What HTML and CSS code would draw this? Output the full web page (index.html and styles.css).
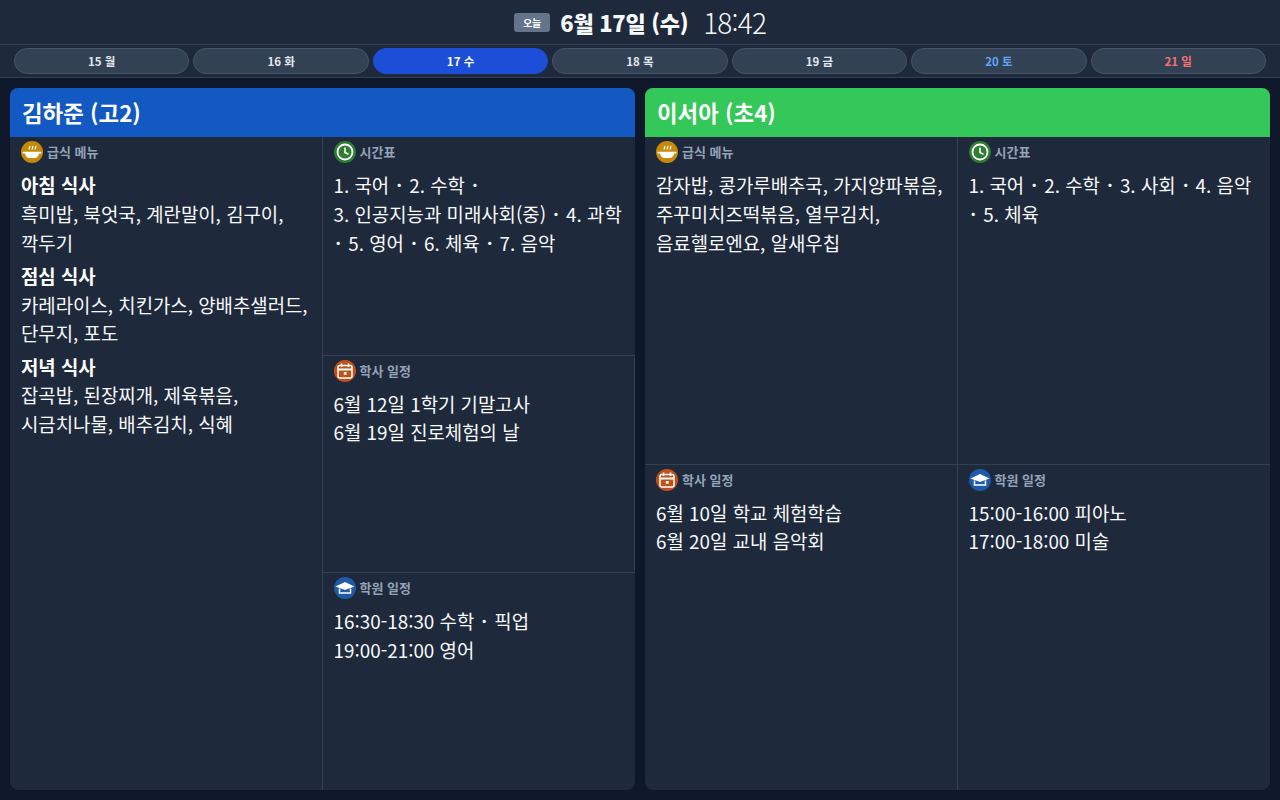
FILE: index.html
```html
<!DOCTYPE html>
<html lang="ko">
<head>
    <meta charset="UTF-8">
    <meta name="viewport" content="width=device-width, initial-scale=1.0">
    <title>가족 일정</title>
    <link rel="stylesheet" href="styles.css">
</head>
<body>
    <svg class="icon-defs" width="0" height="0">
        <symbol id="i-meal" viewBox="0 0 22 22">
            <path d="M4 12h14c0 2.500-1.500 4-3.500 5h-7C5.500 16 4 14.500 4 12z" fill="#fff"/>
            <rect x="1.500" y="10.800" width="19" height="1.800" rx="0.900" fill="#fff"/>
            <path d="M8 8.500l1-3.500M11 8.500l1-3.500M14 8.500l1-3.500" stroke="#fff" stroke-width="1.200" fill="none"/>
        </symbol>
        <symbol id="i-clock" viewBox="0 0 22 22">
            <circle cx="11" cy="11" r="7.500" stroke="#fff" stroke-width="1.800" fill="none"/>
            <path d="M11 6.500V11.500L14.500 13.200" stroke="#fff" stroke-width="1.600" fill="none"/>
        </symbol>
        <symbol id="i-cal" viewBox="0 0 22 22">
            <rect x="4" y="5.500" width="14" height="12.500" rx="2" stroke="#fff" stroke-width="1.500" fill="none"/>
            <path d="M4 9.500h14" stroke="#fff" stroke-width="2"/>
            <path d="M7.500 3.500v3.500M14.500 3.500v3.500" stroke="#fff" stroke-width="1.500"/>
            <rect x="9.800" y="12" width="2.800" height="2.800" fill="#fff"/>
        </symbol>
        <symbol id="i-grad" viewBox="0 0 22 22">
            <path d="M11 5L20.500 9.500L11 13L1.500 9.500z" fill="#fff"/>
            <path d="M5.500 11.500V16H16.500V11.500" stroke="#fff" stroke-width="1.500" fill="none"/>
        </symbol>
    </svg>

    <header class="topbar">
        <span class="today-badge">오늘</span>
        <span class="today-date">6월 17일 (수)</span>
        <span class="today-clock">18:42</span>
    </header>

    <nav class="day-tabs">
        <div class="day-tab">15 월</div>
        <div class="day-tab">16 화</div>
        <div class="day-tab active">17 수</div>
        <div class="day-tab">18 목</div>
        <div class="day-tab">19 금</div>
        <div class="day-tab sat">20 토</div>
        <div class="day-tab sun">21 일</div>
    </nav>

    <main class="board">
        <!-- 첫째 -->
        <section class="kid">
            <h2 class="kid-name blue">김하준 (고2)</h2>
            <div class="kid-grid three">
                <div class="cell meal-cell">
                    <div class="cell-label"><span class="badge amber"><svg><use href="#i-meal"/></svg></span>급식 메뉴</div>
                    <div class="cell-body">
                        <div class="meal-title">아침 식사</div>
                        <div class="meal-text">흑미밥, 북엇국, 계란말이, 김구이, 깍두기</div>
                        <div class="meal-title">점심 식사</div>
                        <div class="meal-text">카레라이스, 치킨가스, 양배추샐러드, 단무지, 포도</div>
                        <div class="meal-title">저녁 식사</div>
                        <div class="meal-text">잡곡밥, 된장찌개, 제육볶음,<br>시금치나물, 배추김치, 식혜</div>
                    </div>
                </div>
                <div class="cell">
                    <div class="cell-label"><span class="badge green"><svg><use href="#i-clock"/></svg></span>시간표</div>
                    <div class="cell-body">1. 국어 ･ 2. 수학 ･<br>3. 인공지능과 미래사회(중) ･ 4. 과학<br>･ 5. 영어 ･ 6. 체육 ･ 7. 음악</div>
                </div>
                <div class="cell">
                    <div class="cell-label"><span class="badge orange"><svg><use href="#i-cal"/></svg></span>학사 일정</div>
                    <div class="cell-body">6월 12일 1학기 기말고사<br>6월 19일 진로체험의 날</div>
                </div>
                <div class="cell">
                    <div class="cell-label"><span class="badge navy"><svg><use href="#i-grad"/></svg></span>학원 일정</div>
                    <div class="cell-body">16:30-18:30 수학 ･ 픽업<br>19:00-21:00 영어</div>
                </div>
            </div>
        </section>

        <!-- 둘째 -->
        <section class="kid">
            <h2 class="kid-name lime">이서아 (초4)</h2>
            <div class="kid-grid two">
                <div class="cell">
                    <div class="cell-label"><span class="badge amber"><svg><use href="#i-meal"/></svg></span>급식 메뉴</div>
                    <div class="cell-body">감자밥, 콩가루배추국, 가지양파볶음,<br>주꾸미치즈떡볶음, 열무김치,<br>음료헬로엔요, 알새우칩</div>
                </div>
                <div class="cell">
                    <div class="cell-label"><span class="badge green"><svg><use href="#i-clock"/></svg></span>시간표</div>
                    <div class="cell-body">1. 국어 ･ 2. 수학 ･ 3. 사회 ･ 4. 음악<br>･ 5. 체육</div>
                </div>
                <div class="cell">
                    <div class="cell-label"><span class="badge orange"><svg><use href="#i-cal"/></svg></span>학사 일정</div>
                    <div class="cell-body">6월 10일 학교 체험학습<br>6월 20일 교내 음악회</div>
                </div>
                <div class="cell">
                    <div class="cell-label"><span class="badge navy"><svg><use href="#i-grad"/></svg></span>학원 일정</div>
                    <div class="cell-body">15:00-16:00 피아노<br>17:00-18:00 미술</div>
                </div>
            </div>
        </section>
    </main>
</body>
</html>
```

FILE: styles.css
```css
* {
    box-sizing: border-box;
}
html, body {
    height: 100%;
}
body {
    margin: 0;
    height: 800px;
    overflow: hidden;
    display: flex;
    flex-direction: column;
    background-color: #0f172a;
    color: #f8fafc;
    font-family: "Noto Sans CJK KR", "Noto Sans", sans-serif;
}
.icon-defs {
    position: absolute;
}
.topbar {
    height: 45px;
    display: flex;
    justify-content: center;
    align-items: center;
    gap: 10px;
    background-color: #1e293b;
    border-bottom: 1px solid #334155;
}
.today-badge {
    background-color: #64748b;
    color: white;
    font-size: 10px;
    font-weight: 700;
    padding: 2px 9px;
    border-radius: 3px;
    line-height: 15px;
}
.today-date {
    font-size: 22px;
    font-weight: 900;
    line-height: 32px;
    letter-spacing: -0.3px;
}
.today-clock {
    font-size: 28px;
    font-weight: 300;
    line-height: 32px;
    letter-spacing: -0.800px;
    margin-left: 5px;
}
.day-tabs {
    height: 33px;
    display: flex;
    gap: 4px;
    padding: 3px 14px 3px;
    background-color: #1e293b;
    border-bottom: 1px solid #334155;
}
.day-tab {
    flex: 1;
    display: flex;
    justify-content: center;
    align-items: center;
    background-color: #334155;
    border: 1px solid #475569;
    border-radius: 13px;
    color: #e2e8f0;
    font-size: 11.500px;
    font-weight: 700;
}
.day-tab.active {
    background-color: #1d4ed8;
    border-color: #1d4ed8;
    color: white;
}
.day-tab.sat {
    color: #60a5fa;
}
.day-tab.sun {
    color: #f87171;
}
.board {
    flex: 1;
    min-height: 0;
    display: grid;
    grid-template-columns: 1fr 1fr;
    gap: 10px;
    padding: 10px;
}
.kid {
    display: flex;
    flex-direction: column;
    min-height: 0;
    background-color: #1e293b;
    border-radius: 8px;
    overflow: hidden;
}
.kid-name {
    margin: 0;
    height: 49px;
    flex-shrink: 0;
    padding: 0 12px;
    font-size: 22.400px;
    font-weight: 700;
    line-height: 49px;
    color: white;
}
.kid-name.blue {
    background-color: #1259c3;
}
.kid-name.lime {
    background-color: #34c759;
}
.kid-grid {
    flex: 1;
    min-height: 0;
    display: grid;
    grid-template-columns: 1fr 1fr;
}
.kid-grid.three {
    grid-template-rows: 1fr 1fr 1fr;
}
.kid-grid.three .meal-cell {
    grid-row: 1 / 4;
}
.kid-grid.two {
    grid-template-rows: 1fr 1fr;
}
.cell {
    padding: 4px 11px;
    border-right: 1px solid #334155;
    min-width: 0;
}
.kid-grid.two .cell:nth-child(2n),
.kid-grid.three .cell:nth-child(2),
.kid-grid.three .cell:last-child {
    border-right: none;
}
.kid-grid.two .cell:nth-child(n+3),
.kid-grid.three .cell:nth-child(n+3) {
    border-top: 1px solid #334155;
}
.cell-label {
    display: flex;
    align-items: flex-start;
    gap: 4px;
    height: 22px;
    color: #94a3b8;
    font-size: 13px;
    font-weight: 700;
    line-height: 21px;
}
.badge {
    width: 22px;
    height: 22px;
    border-radius: 50%;
    flex-shrink: 0;
}
.badge svg {
    display: block;
    width: 22px;
    height: 22px;
}
.badge.amber {
    background-color: #c68a0a;
}
.badge.green {
    background-color: #2e7d32;
}
.badge.orange {
    background-color: #c2501a;
}
.badge.navy {
    background-color: #1f5aa8;
}
.cell-body {
    margin-top: 8px;
    font-size: 18.880px;
    line-height: 28.800px;
    color: #f8fafc;
    word-break: keep-all;
}
.meal-title {
    font-weight: 700;
    color: white;
}
.meal-text {
    margin-bottom: 4.400px;
}
```
